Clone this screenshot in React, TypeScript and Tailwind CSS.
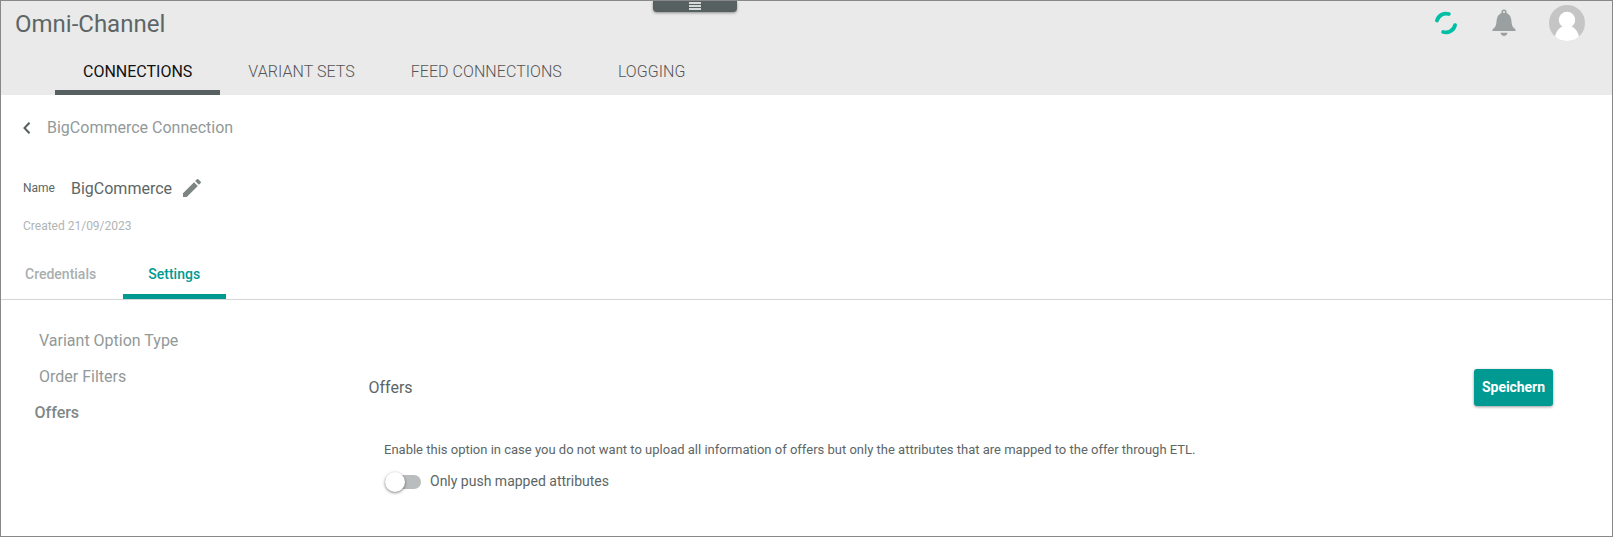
import React from "react";

const tabs = [
  { label: "CONNECTIONS", active: true },
  { label: "VARIANT SETS", active: false },
  { label: "FEED CONNECTIONS", active: false },
  { label: "LOGGING", active: false },
];

function Handle() {
  return (
    <div className="absolute left-[652px] top-0 flex h-[11px] w-[84px] justify-center rounded-b-[4px] bg-[#566060] pt-px shadow-[0_1px_3px_rgba(0,0,0,0.4)]">
      <svg width="12" height="8" viewBox="0 0 12 8" fill="#d5dad9">
        <path d="M0 0h12v2H0zM0 3h12v2H0zM0 6h12v2H0z" />
      </svg>
    </div>
  );
}

function Spinner() {
  return (
    <svg width="24" height="24" viewBox="0 0 24 24" fill="none" stroke="#00bfa5" strokeWidth="3.8" strokeLinecap="round">
      <path d="M3 9.500A9.400 9.400 0 0 1 14.800 3" />
      <path d="M21 14.200A9.400 9.400 0 0 1 9.200 21" />
    </svg>
  );
}

function Bell() {
  return (
    <svg width="24" height="28" viewBox="0 0 24 28" fill="#9aa09f">
      <path
        fillRule="evenodd"
        d="M12 .4a2.6 2.6 0 0 1 2.5 3.5c3 1.2 4.600 3.900 4.900 7.600.3 4.300 1 6.800 3 8 .7.4 1.100.8 1.100 1.400v1H.5v-1c0-.6.4-1 1.100-1.400 2-1.200 2.700-3.700 3-8C4.900 7.800 6.500 5.100 9.500 3.900A2.600 2.600 0 0 1 12 .4zm0 1.500a1.100 1.100 0 1 0 0 2.200 1.100 1.100 0 0 0 0-2.200z"
      />
      <path d="M8.500 23.800h7c-.2 1.900-1.600 3.200-3.500 3.200s-3.300-1.300-3.500-3.200z" />
    </svg>
  );
}

function Avatar() {
  return (
    <svg width="36" height="36" viewBox="0 0 36 36">
      <circle cx="18" cy="18" r="18" fill="#c5c5c5" />
      <circle cx="18" cy="15" r="8.200" fill="#fff" />
      <path d="M6 31.400C7.500 25.500 11 22 14 21.500h8c3 .5 6.500 4 8 9.900A18 18 0 0 1 6 31.400z" fill="#fff" />
    </svg>
  );
}

export default function App() {
  return (
    <div className="relative h-[537px] w-[1613px] overflow-hidden border border-[#888888] bg-white font-['Roboto',sans-serif] text-[#5c6666]">
      <Handle />
      <header className="h-[94px] bg-[#eaeaea]">
        <div className="flex h-[44px] items-center justify-between pl-[14px] pr-[27px]">
          <h1 className="pt-[2px] text-[24px] leading-[44px]">Omni-Channel</h1>
          <div className="flex items-center">
            <Spinner />
            <div className="ml-[33.5px]">
              <Bell />
            </div>
            <div className="ml-[33.5px]">
              <Avatar />
            </div>
          </div>
        </div>
        <nav className="flex h-[50px] pl-[54px]">
          {tabs.map((t) => (
            <div
              key={t.label}
              className={
                t.active
                  ? "border-b-[5px] border-[#566060] px-[28px] text-[16px] leading-[54px] text-[#111111]"
                  : "px-[28px] text-[16px] font-light leading-[54px] tracking-[0.05px] text-[#555555]"
              }
            >
              {t.label}
            </div>
          ))}
        </nav>
      </header>

      <div className="flex h-[66px] items-center pl-[21px] text-[#929999]">
        <svg width="9" height="14" viewBox="0 0 9 14" fill="none" stroke="#566060" strokeWidth="2">
          <path d="M7.500 1.800L2.500 7l5 5.200" />
        </svg>
        <span className="ml-[16px] text-[16px] leading-6">BigCommerce Connection</span>
      </div>

      <div className="mt-[14px] flex h-[26px] items-center pl-[22px]">
        <span className="text-[12px] leading-4">Name</span>
        <span className="ml-[16px] pt-[2px] text-[16px] leading-6">BigCommerce</span>
        <svg className="ml-[8px]" width="24" height="24" viewBox="0 0 24 24" fill="#7d8484">
          <path d="M3 17.250V21h3.750L17.810 9.940l-3.750-3.750L3 17.250zM20.710 7.040a1 1 0 0 0 0-1.410l-2.340-2.340a1 1 0 0 0-1.410 0l-1.830 1.830 3.750 3.750 1.830-1.830z" />
        </svg>
      </div>
      <div className="mt-[16px] pl-[22px] text-[12px] leading-[18px] text-[#b0b5b5]">Created 21/09/2023</div>

      <div className="mt-[14px] flex h-[51px] border-b border-[#d5d5d5] text-[14px] font-medium leading-[50px]">
        <div className="w-[121.700px] pl-[24px] text-[#a9afaf]">Credentials</div>
        <div className="h-[50px] w-[103px] border-b-[5px] border-[#009a93] text-center text-[#009a93]">Settings</div>
      </div>

      <main className="flex">
        <aside className="w-[367.5px] pt-[23px] text-[16px] leading-9 text-[#929999]">
          <div className="pl-[38px]">Variant Option Type</div>
          <div className="pl-[38px]">Order Filters</div>
          <div className="pl-[33.5px] font-medium text-[#808888]">Offers</div>
        </aside>
        <section className="flex-1 pr-[59px] pt-[69px]">
          <div className="flex h-[37px] items-center justify-between">
            <h2 className="text-[16px] leading-6">Offers</h2>
            <button className="h-[37px] w-[79px] rounded-[3px] bg-[#009a93] text-[14px] font-bold tracking-[-0.05px] text-white shadow-[0_1px_3px_rgba(0,0,0,0.4)]">
              Speichern
            </button>
          </div>
          <p className="mt-[34px] pl-[15.5px] text-[13px] leading-5">
            Enable this option in case you do not want to upload all information of offers but only the attributes that are
            mapped to the offer through ETL.
          </p>
          <div className="mt-[12px] flex h-[20px] items-center pl-[16.5px]">
            <span className="flex h-[14px] w-[36px] items-center rounded-full bg-[#b9bdbd]">
              <span className="h-5 w-5 shrink-0 rounded-full bg-white shadow-[0_1px_3px_rgba(0,0,0,0.5)]" />
            </span>
            <span className="ml-[9px] -mt-[2px] text-[14px] leading-5">Only push mapped attributes</span>
          </div>
        </section>
      </main>
    </div>
  );
}
